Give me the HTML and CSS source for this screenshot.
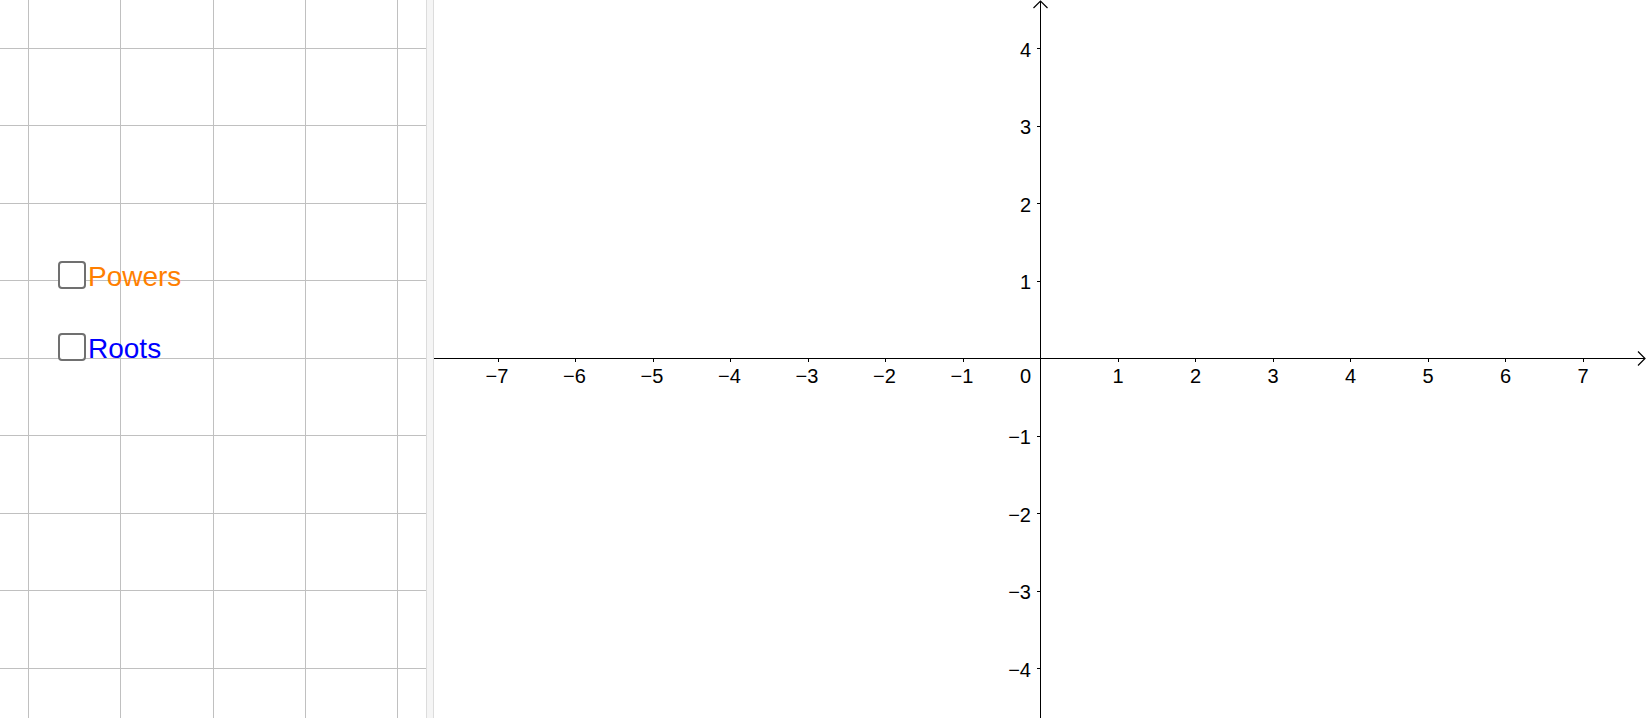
FILE: index.html
```html
<!DOCTYPE html>
<html>
<head>
<meta charset="utf-8">
<link rel="stylesheet" href="styles.css">
</head>
<body>
<div class="app">
  <div class="algebra">
    <svg class="grid" width="426" height="718" viewBox="0 0 426 718" shape-rendering="crispEdges">
      <g stroke="#c0c0c0" stroke-width="1">
        <line x1="28.5" y1="0" x2="28.5" y2="718"/>
        <line x1="120.5" y1="0" x2="120.5" y2="718"/>
        <line x1="213.5" y1="0" x2="213.5" y2="718"/>
        <line x1="305.5" y1="0" x2="305.5" y2="718"/>
        <line x1="397.5" y1="0" x2="397.5" y2="718"/>
        <line x1="0" y1="48.5" x2="426" y2="48.5"/>
        <line x1="0" y1="125.5" x2="426" y2="125.5"/>
        <line x1="0" y1="203.5" x2="426" y2="203.5"/>
        <line x1="0" y1="280.5" x2="426" y2="280.5"/>
        <line x1="0" y1="358.5" x2="426" y2="358.5"/>
        <line x1="0" y1="435.5" x2="426" y2="435.5"/>
        <line x1="0" y1="513.5" x2="426" y2="513.5"/>
        <line x1="0" y1="590.5" x2="426" y2="590.5"/>
        <line x1="0" y1="668.5" x2="426" y2="668.5"/>
      </g>
    </svg>
    <label class="check check-powers"><span class="box"></span><span class="txt powers">Powers</span></label>
    <label class="check check-roots"><span class="box"></span><span class="txt roots">Roots</span></label>
  </div>
  <div class="divider"></div>
  <div class="graphics">
    <svg width="1214" height="718" viewBox="0 0 1214 718">
      <g stroke="#000" stroke-width="1" fill="none" shape-rendering="crispEdges">
        <line x1="0" y1="358.5" x2="1211" y2="358.5"/>
        <line x1="606.5" y1="1" x2="606.5" y2="718"/>
        <!-- x ticks -->
        <line x1="64" y1="358" x2="64" y2="362"/>
        <line x1="141.5" y1="358" x2="141.5" y2="362"/>
        <line x1="219" y1="358" x2="219" y2="362"/>
        <line x1="296.5" y1="358" x2="296.5" y2="362"/>
        <line x1="374" y1="358" x2="374" y2="362"/>
        <line x1="451.5" y1="358" x2="451.5" y2="362"/>
        <line x1="529" y1="358" x2="529" y2="362"/>
        <line x1="684" y1="358" x2="684" y2="362"/>
        <line x1="761.5" y1="358" x2="761.5" y2="362"/>
        <line x1="839" y1="358" x2="839" y2="362"/>
        <line x1="916.5" y1="358" x2="916.5" y2="362"/>
        <line x1="994" y1="358" x2="994" y2="362"/>
        <line x1="1071.5" y1="358" x2="1071.5" y2="362"/>
        <line x1="1149" y1="358" x2="1149" y2="362"/>
        <!-- y ticks -->
        <line x1="603" y1="48.5" x2="607" y2="48.5"/>
        <line x1="603" y1="126" x2="607" y2="126"/>
        <line x1="603" y1="203.5" x2="607" y2="203.5"/>
        <line x1="603" y1="281" x2="607" y2="281"/>
        <line x1="603" y1="436" x2="607" y2="436"/>
        <line x1="603" y1="513.5" x2="607" y2="513.5"/>
        <line x1="603" y1="591" x2="607" y2="591"/>
        <line x1="603" y1="668.5" x2="607" y2="668.5"/>
      </g>
      <g stroke="#000" stroke-width="1.2" fill="none">
        <polyline points="599.5,8 606.5,1 613.5,8"/>
        <polyline points="1204,351.5 1211,358.5 1204,365.5"/>
      </g>
      <g class="xl" text-anchor="middle">
        <text x="63" y="383">−7</text>
        <text x="140.5" y="383">−6</text>
        <text x="218" y="383">−5</text>
        <text x="295.5" y="383">−4</text>
        <text x="373" y="383">−3</text>
        <text x="450.5" y="383">−2</text>
        <text x="528" y="383">−1</text>
        <text x="684" y="383">1</text>
        <text x="761.5" y="383">2</text>
        <text x="839" y="383">3</text>
        <text x="916.5" y="383">4</text>
        <text x="994" y="383">5</text>
        <text x="1071.5" y="383">6</text>
        <text x="1149" y="383">7</text>
      </g>
      <g class="yl" text-anchor="end">
        <text x="597" y="383">0</text>
        <text x="597" y="56.5">4</text>
        <text x="597" y="134">3</text>
        <text x="597" y="211.5">2</text>
        <text x="597" y="289">1</text>
        <text x="597" y="444">−1</text>
        <text x="597" y="521.5">−2</text>
        <text x="597" y="599">−3</text>
        <text x="597" y="676.5">−4</text>
      </g>
    </svg>
  </div>
</div>
</body>
</html>
```
FILE: styles.css
```css
html, body {
  margin: 0;
  padding: 0;
  background: #fff;
  overflow: hidden;
}
.app {
  display: flex;
  width: 1648px;
  height: 718px;
  font-family: "Liberation Sans", Arial, sans-serif;
}
.algebra {
  position: relative;
  width: 426px;
  height: 718px;
  flex: none;
}
.grid {
  display: block;
}
.divider {
  width: 6px;
  flex: none;
  background: #f5f5f5;
  border-left: 1px solid #dcdcdc;
  border-right: 1px solid #dcdcdc;
}
.graphics {
  flex: 1;
  height: 718px;
}
.graphics svg {
  display: block;
}
.xl text, .yl text {
  font-family: "Liberation Sans", Arial, sans-serif;
  font-size: 20px;
  fill: #000;
}
.check {
  position: absolute;
  left: 58px;
  display: flex;
  align-items: flex-end;
  gap: 2px;
}
.check-powers {
  top: 261px;
}
.check-roots {
  top: 333px;
}
.box {
  width: 24px;
  height: 24px;
  border: 2px solid #707070;
  border-radius: 4px;
  background: #fff;
  flex: none;
  box-sizing: content-box;
}
.txt {
  font-size: 28px;
  line-height: 28px;
  position: relative;
  top: 2px;
}
.powers {
  color: #ff7f00;
}
.roots {
  color: #0000ff;
}
```
